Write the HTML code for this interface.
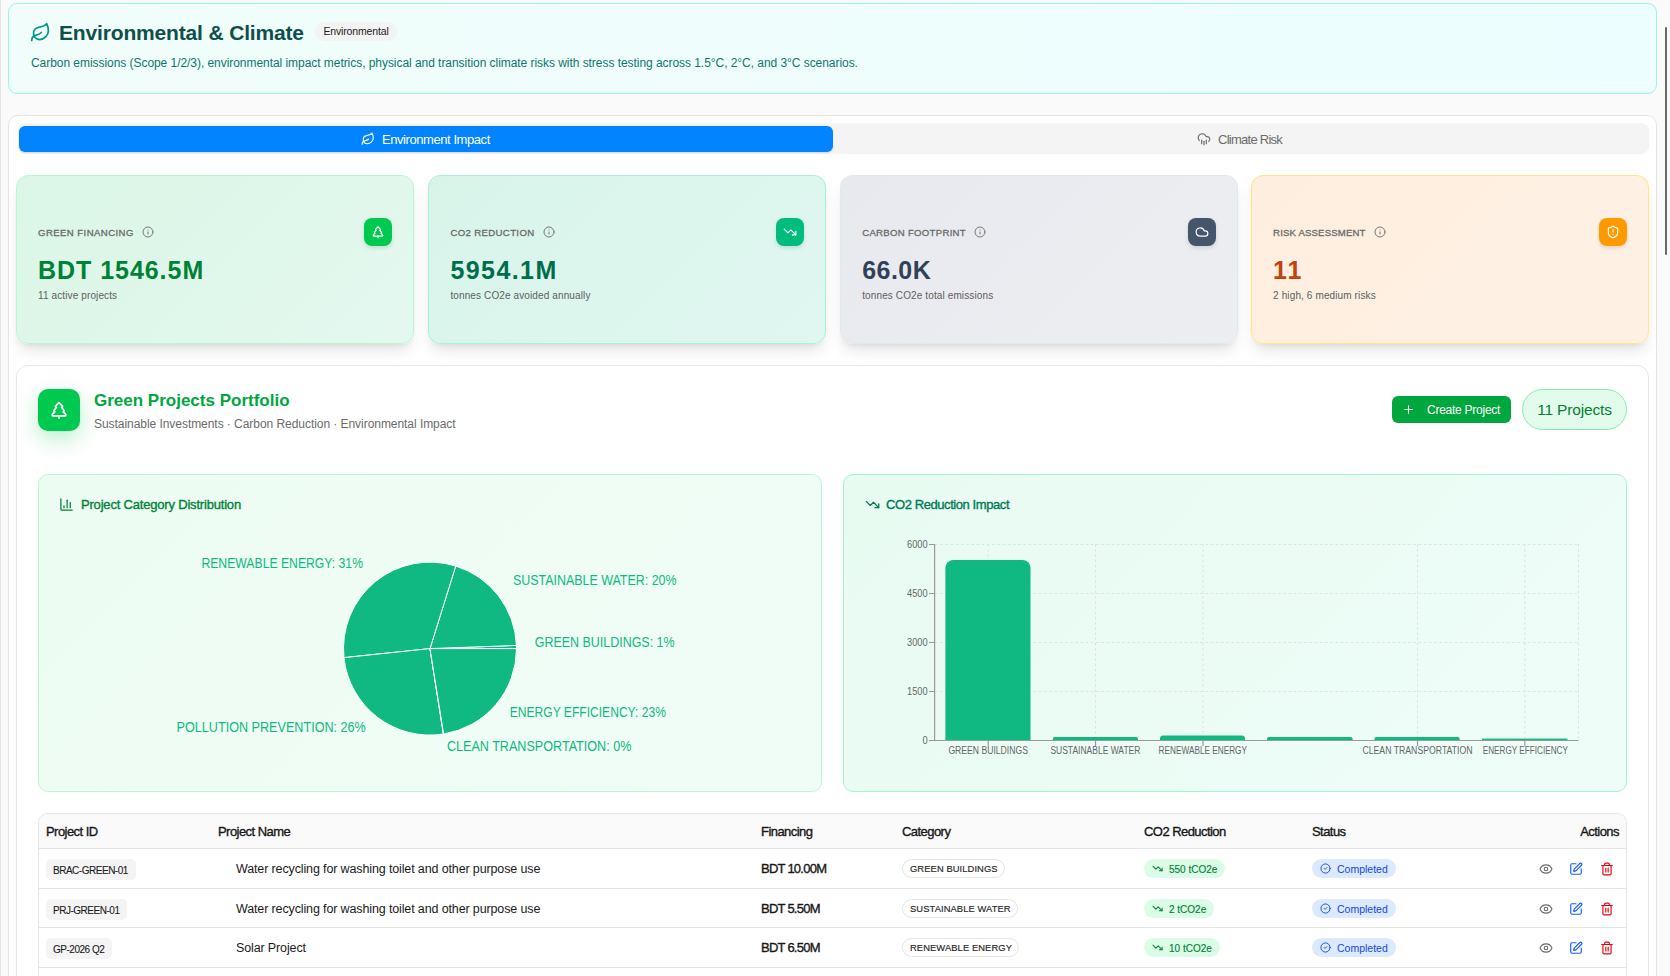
<!DOCTYPE html>
<html><head><meta charset="utf-8">
<style>
*{box-sizing:border-box;margin:0;padding:0}
html,body{width:1670px;height:976px;overflow:hidden}
body{background:#fafafa;font-family:"Liberation Sans",sans-serif;position:relative;color:#171717}
.abs{position:absolute}
svg{display:block}
.ico{fill:none;stroke:currentColor;stroke-linecap:round;stroke-linejoin:round}
#leftline{left:0;top:0;width:1px;height:976px;background:#e3e3e3}
#scroll{left:1665px;top:27px;width:2px;height:228px;background:#6a6a6a;border-radius:1px}
/* header */
#hdr{left:8px;top:3px;width:1649px;height:91px;border:1px solid #99f6e4;border-radius:9px;background:linear-gradient(90deg,#f0fdfa,#ecfeff)}
#hdr .title{left:50px;top:17px;font-size:21px;font-weight:700;letter-spacing:-.16px;color:#0f4f4a;white-space:nowrap}
#hdr .badge{left:306px;top:18px;height:19px;width:82px;border-radius:10px;background:#f3f3f3;font-size:10.5px;letter-spacing:-.15px;color:#1c1c1c;text-align:center;line-height:19px}
#hdr .desc{left:22px;top:52px;font-size:12px;letter-spacing:-.05px;color:#0f766e;white-space:nowrap}
/* outer */
#outer{left:8px;top:115px;width:1649px;height:900px;border:1px solid #e5e5e5;border-radius:10px;background:#fff}
#tabs{left:18px;top:123px;width:1631px;height:31px;background:#f4f4f4;border-radius:8px}
#tab1{left:19px;top:126px;width:814px;height:26px;background:#0283ff;border-radius:6px;box-shadow:0 1px 2px rgba(0,0,0,.12)}
.tabtxt{font-size:13px;white-space:nowrap}
/* stat cards */
.card{top:175.4px;width:397.5px;height:168.3px;border-radius:12px;border:1px solid;box-shadow:0 10px 15px -3px rgba(0,0,0,.1),0 4px 6px -4px rgba(0,0,0,.1)}
.card .lbl{left:21px;top:49.6px;font-size:9.6px;font-weight:400;-webkit-text-stroke:.3px #6b6b6b;letter-spacing:-.1px;color:#6b6b6b;white-space:nowrap;display:flex;align-items:center;height:13px}
.card .lbl svg{margin-left:8px;position:relative;top:-.5px}
.card .val{left:21px;top:80px;font-size:25px;font-weight:700;white-space:nowrap}
.card .sub{left:21px;top:113.5px;font-size:10px;letter-spacing:.12px;color:#606060;white-space:nowrap}
.card .ib{top:42px;width:28px;height:28px;border-radius:8px;box-shadow:0 2px 4px rgba(0,0,0,.12);color:#fff}
.card .ib svg{position:absolute;left:7px;top:7px}
.info{color:#777}
/* portfolio */
#port{left:16px;top:365.3px;width:1633px;height:650px;border:1px solid #e8e8e8;border-radius:12px;background:#fff}
#treebox{left:38px;top:389px;width:42px;height:42px;border-radius:10px;background:#00c950;box-shadow:0 8px 22px rgba(0,201,80,.28);color:#fff}
#ptitle{left:94px;top:391px;font-size:17px;font-weight:700;color:#00a63e;white-space:nowrap}
#psub{left:94px;top:417px;font-size:12px;letter-spacing:-.05px;color:#6b6b6b;white-space:nowrap}
#cbtn{left:1392px;top:396px;width:119px;height:27px;border-radius:6px;background:#00a63e;color:#fff}
#pill{left:1522px;top:389px;width:105px;height:41px;border-radius:21px;border:1px solid #86efac;background:#e3fbea;color:#008236;font-size:15.5px;letter-spacing:-.17px;text-align:center;line-height:39px}
.chart{top:474px;width:784px;height:318px;border:1px solid #b9f8cf;border-radius:10px;background:linear-gradient(135deg,#ecfdf3,#effdf8)}
.ctitle{font-size:13px;font-weight:400;-webkit-text-stroke:.35px currentColor;white-space:nowrap}
/* table */
#tbl{left:38px;top:813px;width:1589px;height:200px;border:1px solid #e5e5e5;border-radius:10px;overflow:hidden;background:#fff}
#thead{left:0;top:0;width:100%;height:35px;background:#fafafa;border-bottom:1px solid #e5e5e5}
.th{top:10px;font-size:13px;font-weight:400;-webkit-text-stroke:.35px #171717;letter-spacing:-.55px;color:#171717;white-space:nowrap}
.row{left:0;width:100%;height:39.5px;border-bottom:1px solid #e5e5e5}
.idb{left:7px;top:10px;height:21px;border-radius:5px;background:#f4f4f5;font-size:10px;color:#1a1a1a;-webkit-text-stroke:.1px #1a1a1a;line-height:23.5px;padding:0 8px 0 7px;white-space:nowrap;letter-spacing:-.48px}
.pname{left:197px;top:13.2px;font-size:12.5px;letter-spacing:-.13px;color:#1a1a1a;white-space:nowrap}
.fin{left:722px;top:12px;font-size:13px;font-weight:400;-webkit-text-stroke:.35px #171717;letter-spacing:-.75px;color:#171717;white-space:nowrap}
.catb{left:863px;top:10px;height:19px;border-radius:10px;border:1px solid #e5e5e5;font-size:9.4px;letter-spacing:.08px;color:#1f1f1f;-webkit-text-stroke:.15px #1f1f1f;line-height:18.5px;padding:0 6px 0 7px;white-space:nowrap}
.co2b{left:1105px;top:10px;height:19px;border-radius:10px;background:#dcfce7;color:#008236;-webkit-text-stroke:.15px #008236;font-size:10px;line-height:21px;padding:0 8px 0 25px;white-space:nowrap}
.co2b svg{position:absolute;left:8px;top:4px}
.stb{left:1273px;top:10px;height:19px;width:84px;border-radius:10px;background:#dbeafe;color:#1447e6;font-size:10.5px;line-height:20.5px;padding-left:25px;white-space:nowrap}
.stb svg{position:absolute;left:8px;top:4px}
.act{top:12px}
</style></head>
<body>
<div id="leftline" class="abs"></div>
<div id="scroll" class="abs"></div>

<!-- HEADER -->
<div id="hdr" class="abs">
  <svg class="abs ico" style="left:21px;top:18px;color:#009689" width="21" height="21" viewBox="0 0 24 24" stroke-width="2"><path d="M11 20A7 7 0 0 1 9.8 6.1C15.5 5 17 4.48 19 2c1 2 2 4.18 2 8 0 5.5-4.78 10-10 10Z"/><path d="M2 21c0-3 1.85-5.36 5.08-6C9.5 14.52 12 13 13 12"/></svg>
  <div class="abs title">Environmental &amp; Climate</div>
  <div class="abs badge">Environmental</div>
  <div class="abs desc">Carbon emissions (Scope 1/2/3), environmental impact metrics, physical and transition climate risks with stress testing across 1.5°C, 2°C, and 3°C scenarios.</div>
</div>

<!-- OUTER CARD -->
<div id="outer" class="abs"></div>
<div id="tabs" class="abs"></div>
<div id="tab1" class="abs"></div>
<svg class="abs ico" style="left:361px;top:132px;color:#fff" width="14" height="14" viewBox="0 0 24 24" stroke-width="2"><path d="M11 20A7 7 0 0 1 9.8 6.1C15.5 5 17 4.48 19 2c1 2 2 4.18 2 8 0 5.5-4.78 10-10 10Z"/><path d="M2 21c0-3 1.85-5.36 5.08-6C9.5 14.52 12 13 13 12"/></svg>
<div class="abs tabtxt" style="left:382px;top:132px;color:#fff;letter-spacing:-.43px">Environment Impact</div>
<svg class="abs ico" style="left:1196.8px;top:132px;color:#6b6b6b" width="14" height="14" viewBox="0 0 24 24" stroke-width="2"><path d="M4 14.899A7 7 0 1 1 15.71 8h1.79a4.5 4.5 0 0 1 2.5 8.242"/><path d="M16 14v6"/><path d="M8 14v6"/><path d="M12 16v6"/></svg>
<div class="abs tabtxt" style="left:1218px;top:132px;color:#6b6b6b;letter-spacing:-.74px">Climate Risk</div>

<!-- STAT CARDS -->
<div class="abs card" style="left:16px;border-color:#b9f8cf;background:linear-gradient(135deg,#dbf6e6,#e4f8ef)">
  <div class="abs lbl" style="letter-spacing:.42px">GREEN FINANCING<svg class="ico info" style="" width="12" height="12" viewBox="0 0 24 24" stroke-width="2"><circle cx="12" cy="12" r="10"/><path d="M12 16v-4"/><path d="M12 8h.01"/></svg></div>
  <div class="abs val" style="color:#008236;letter-spacing:.96px">BDT 1546.5M</div>
  <div class="abs sub">11 active projects</div>
  <div class="abs ib" style="left:347px;background:#00c950"><svg class="ico" width="14" height="14" viewBox="0 0 24 24" stroke-width="2"><path d="m17 14 3 3.3a1 1 0 0 1-.7 1.7H4.7a1 1 0 0 1-.7-1.7L7 14h-.3a1 1 0 0 1-.7-1.7L9 9h-.2A1 1 0 0 1 8 7.3L12 3l4 4.3a1 1 0 0 1-.8 1.7H15l3 3.3a1 1 0 0 1-.7 1.7H17Z"/><path d="M12 22v-3"/></svg></div>
</div>
<div class="abs card" style="left:428.4px;border-color:#a4f4cf;background:linear-gradient(135deg,#d8f4e9,#e0f7f1)">
  <div class="abs lbl" style="letter-spacing:.36px">CO2 REDUCTION<svg class="ico info" style="" width="12" height="12" viewBox="0 0 24 24" stroke-width="2"><circle cx="12" cy="12" r="10"/><path d="M12 16v-4"/><path d="M12 8h.01"/></svg></div>
  <div class="abs val" style="color:#006e4e;letter-spacing:1.43px">5954.1M</div>
  <div class="abs sub">tonnes CO2e avoided annually</div>
  <div class="abs ib" style="left:347px;background:#00bc7d"><svg class="ico" width="14" height="14" viewBox="0 0 24 24" stroke-width="2"><path d="M16 17h6v-6"/><path d="m22 17-8.5-8.5-5 5L2 7"/></svg></div>
</div>
<div class="abs card" style="left:840.2px;border-color:#e2e8f0;background:linear-gradient(135deg,#e7e9ee,#eceef2)">
  <div class="abs lbl" style="letter-spacing:.29px">CARBON FOOTPRINT<svg class="ico info" style="" width="12" height="12" viewBox="0 0 24 24" stroke-width="2"><circle cx="12" cy="12" r="10"/><path d="M12 16v-4"/><path d="M12 8h.01"/></svg></div>
  <div class="abs val" style="color:#314158;letter-spacing:.45px">66.0K</div>
  <div class="abs sub">tonnes CO2e total emissions</div>
  <div class="abs ib" style="left:347px;background:#45556c"><svg class="ico" width="14" height="14" viewBox="0 0 24 24" stroke-width="2"><path d="M17.5 19H9a7 7 0 1 1 6.71-9h1.79a4.5 4.5 0 1 1 0 9Z"/></svg></div>
</div>
<div class="abs card" style="left:1251.1px;border-color:#fee685;background:linear-gradient(135deg,#feeedf,#fef1e4)">
  <div class="abs lbl" style="letter-spacing:.16px">RISK ASSESSMENT<svg class="ico info" style="" width="12" height="12" viewBox="0 0 24 24" stroke-width="2"><circle cx="12" cy="12" r="10"/><path d="M12 16v-4"/><path d="M12 8h.01"/></svg></div>
  <div class="abs val" style="color:#c2410c;letter-spacing:1.9px">11</div>
  <div class="abs sub">2 high, 6 medium risks</div>
  <div class="abs ib" style="left:347px;background:#fe9a00"><svg class="ico" width="14" height="14" viewBox="0 0 24 24" stroke-width="2"><path d="M20 13c0 5-3.5 7.5-7.66 8.95a1 1 0 0 1-.67-.01C7.5 20.5 4 18 4 13V6a1 1 0 0 1 1-1c2 0 4.5-1.2 6.24-2.72a1.17 1.17 0 0 1 1.52 0C14.51 3.81 17 5 19 5a1 1 0 0 1 1 1z"/><path d="M12 8v4"/><path d="M12 16h.01"/></svg></div>
</div>

<!-- PORTFOLIO -->
<div id="port" class="abs"></div>
<div id="treebox" class="abs"><svg class="abs ico" style="left:11px;top:11px" width="20" height="20" viewBox="0 0 24 24" stroke-width="2"><path d="m17 14 3 3.3a1 1 0 0 1-.7 1.7H4.7a1 1 0 0 1-.7-1.7L7 14h-.3a1 1 0 0 1-.7-1.7L9 9h-.2A1 1 0 0 1 8 7.3L12 3l4 4.3a1 1 0 0 1-.8 1.7H15l3 3.3a1 1 0 0 1-.7 1.7H17Z"/><path d="M12 22v-3"/></svg></div>
<div id="ptitle" class="abs">Green Projects Portfolio</div>
<div id="psub" class="abs">Sustainable Investments · Carbon Reduction · Environmental Impact</div>
<div id="cbtn" class="abs">
  <svg class="abs ico" style="left:9.5px;top:7px" width="13" height="13" viewBox="0 0 24 24" stroke-width="2"><path d="M5 12h14"/><path d="M12 5v14"/></svg>
  <div class="abs" style="left:35px;top:7px;font-size:12px;letter-spacing:-.25px;white-space:nowrap">Create Project</div>
</div>
<div id="pill" class="abs">11 Projects</div>

<!-- CHARTS -->
<div class="abs chart" style="left:38px;border-color:#b9f8cf;background:linear-gradient(135deg,#edfcf2,#f0fdf7)"></div>
<div class="abs chart" style="left:843px;border-color:#a4f4cf;background:linear-gradient(135deg,#e8fbf1,#effdf9)"></div>
<svg class="abs ico" style="left:59px;top:497px;color:#008236" width="15" height="15" viewBox="0 0 24 24" stroke-width="2"><path d="M3 3v16a2 2 0 0 0 2 2h16"/><path d="M18 17V9"/><path d="M13 17V5"/><path d="M8 17v-3"/></svg>
<div class="abs ctitle" style="left:81px;top:497.4px;color:#008236;letter-spacing:-.19px">Project Category Distribution</div>
<svg class="abs ico" style="left:865px;top:497px;color:#007a55" width="15" height="15" viewBox="0 0 24 24" stroke-width="2"><path d="M16 17h6v-6"/><path d="m22 17-8.5-8.5-5 5L2 7"/></svg>
<div class="abs ctitle" style="left:886px;top:497.4px;color:#007a55;letter-spacing:-.42px">CO2 Reduction Impact</div>

<svg class="abs" style="left:0;top:0" width="1670" height="976" viewBox="0 0 1670 976">
 <g fill="#10b981" stroke="#fff" stroke-width="1">
  <path d="M430,648.6 L516.50,648.60 A86.5,86.5 0 0 0 516.44,645.43 Z"/>
  <path d="M430,648.6 L516.44,645.43 A86.5,86.5 0 0 0 455.72,566.01 Z"/>
  <path d="M430,648.6 L455.72,566.01 A86.5,86.5 0 0 0 343.97,657.64 Z"/>
  <path d="M430,648.6 L343.97,657.64 A86.5,86.5 0 0 0 443.38,734.06 Z"/>
  <path d="M430,648.6 L443.38,734.06 A86.5,86.5 0 0 0 443.61,734.02 Z"/>
  <path d="M430,648.6 L443.61,734.02 A86.5,86.5 0 0 0 516.50,648.60 Z"/>
 </g>
 <g fill="#10b981" font-family="Liberation Sans, sans-serif" font-size="14" lengthAdjust="spacingAndGlyphs">
  <text x="201.4" y="568" textLength="161.6" lengthAdjust="spacingAndGlyphs">RENEWABLE ENERGY: 31%</text>
  <text x="512.9" y="584.8" textLength="163.7" lengthAdjust="spacingAndGlyphs">SUSTAINABLE WATER: 20%</text>
  <text x="534.7" y="646.8" textLength="139.9" lengthAdjust="spacingAndGlyphs">GREEN BUILDINGS: 1%</text>
  <text x="509.7" y="716.8" textLength="156.2" lengthAdjust="spacingAndGlyphs">ENERGY EFFICIENCY: 23%</text>
  <text x="176.6" y="731.5" textLength="189.2" lengthAdjust="spacingAndGlyphs">POLLUTION PREVENTION: 26%</text>
  <text x="446.9" y="751.3" textLength="184.5" lengthAdjust="spacingAndGlyphs">CLEAN TRANSPORTATION: 0%</text>
 </g>
 <!-- bar chart -->
 <g stroke="#e2e2e2" stroke-width="1" stroke-dasharray="2.6 2.6" fill="none">
  <path d="M935,544.5H1578.5M935,593.5H1578.5M935,642.5H1578.5M935,691.5H1578.5"/>
  <path d="M988.2,544V740M1095.5,544V740M1203,544V740M1417.5,544V740M1524.8,544V740M1578.5,544V740"/>
 </g>
 <g fill="#10b981">
  <path d="M945.4,740V568a8,8 0 0 1 8,-8H1022.5a8,8 0 0 1 8,8V740Z"/>
  <path d="M1052.8,740V739a2,2 0 0 1 2,-2H1136a2,2 0 0 1 2,2V740Z"/>
  <path d="M1160,740V739a3,3 0 0 1 3,-3.5H1242a3,3 0 0 1 3,3.5V740Z"/>
  <path d="M1267,740V739a2,2 0 0 1 2,-2H1350.6a2,2 0 0 1 2,2V740Z"/>
  <path d="M1374.5,740V739a2,2 0 0 1 2,-2H1457.7a2,2 0 0 1 2,2V740Z"/>
  <rect x="1482" y="738.6" width="85.5" height="1.6"/>
 </g>
 <g stroke="#999" stroke-width="1.2" fill="none">
  <path d="M934.6,544V740.5"/>
  <path d="M934,740.5H1578.5"/>
  <path d="M929,544.5H934.6M929,593.5H934.6M929,642.5H934.6M929,691.5H934.6M929,740.5H934.6"/>
  <path d="M988.2,740.5V746M1095.5,740.5V746M1203,740.5V746M1417.5,740.5V746M1524.8,740.5V746"/>
 </g>
 <g fill="#666" font-family="Liberation Sans, sans-serif" font-size="10" text-anchor="end">
  <text x="927.6" y="548.4" textLength="20.6" lengthAdjust="spacingAndGlyphs">6000</text>
  <text x="927.6" y="597.4" textLength="20.6" lengthAdjust="spacingAndGlyphs">4500</text>
  <text x="927.6" y="646.4" textLength="20.6" lengthAdjust="spacingAndGlyphs">3000</text>
  <text x="927.6" y="695.4" textLength="20.6" lengthAdjust="spacingAndGlyphs">1500</text>
  <text x="927.6" y="744.4" textLength="5.2" lengthAdjust="spacingAndGlyphs">0</text>
 </g>
 <g fill="#666" font-family="Liberation Sans, sans-serif" font-size="10">
  <text x="948.4" y="754.2" textLength="79.5" lengthAdjust="spacingAndGlyphs">GREEN BUILDINGS</text>
  <text x="1050.4" y="754.2" textLength="90" lengthAdjust="spacingAndGlyphs">SUSTAINABLE WATER</text>
  <text x="1158.6" y="754.2" textLength="88.4" lengthAdjust="spacingAndGlyphs">RENEWABLE ENERGY</text>
  <text x="1362.4" y="754.2" textLength="110.2" lengthAdjust="spacingAndGlyphs">CLEAN TRANSPORTATION</text>
  <text x="1482.7" y="754.2" textLength="85.3" lengthAdjust="spacingAndGlyphs">ENERGY EFFICIENCY</text>
 </g>
</svg>

<!-- TABLE -->
<div id="tbl" class="abs">
  <div id="thead" class="abs">
    <div class="abs th" style="left:7px">Project ID</div>
    <div class="abs th" style="left:179px">Project Name</div>
    <div class="abs th" style="left:722px">Financing</div>
    <div class="abs th" style="left:863px">Category</div>
    <div class="abs th" style="left:1105px">CO2 Reduction</div>
    <div class="abs th" style="left:1273px">Status</div>
    <div class="abs th" style="right:7px">Actions</div>
  </div>
  <div class="abs row" style="top:35px">
    <div class="abs idb">BRAC-GREEN-01</div>
    <div class="abs pname">Water recycling for washing toilet and other purpose use</div>
    <div class="abs fin">BDT 10.00M</div>
    <div class="abs catb">GREEN BUILDINGS</div>
    <div class="abs co2b"><svg class="ico" width="11" height="11" viewBox="0 0 24 24" stroke-width="2.2"><path d="M16 17h6v-6"/><path d="m22 17-8.5-8.5-5 5L2 7"/></svg>550 tCO2e</div>
    <div class="abs stb"><svg class="ico" width="11" height="11" viewBox="0 0 24 24" stroke-width="2"><circle cx="12" cy="12" r="10"/><path d="m9 12 2 2 4-4"/></svg>Completed</div>
    <svg class="abs ico" style="left:1499.5px;top:13.3px;color:#6b6b6b" width="14" height="14" viewBox="0 0 24 24" stroke-width="2"><path d="M2.062 12.348a1 1 0 0 1 0-.696 10.75 10.75 0 0 1 19.876 0 1 1 0 0 1 0 .696 10.75 10.75 0 0 1-19.876 0"/><circle cx="12" cy="12" r="3"/></svg>
    <svg class="abs ico" style="left:1530px;top:13.3px;color:#155dfc" width="14" height="14" viewBox="0 0 24 24" stroke-width="2"><path d="M12 3H5a2 2 0 0 0-2 2v14a2 2 0 0 0 2 2h14a2 2 0 0 0 2-2v-7"/><path d="M18.375 2.625a1 1 0 0 1 3 3l-9.013 9.014a2 2 0 0 1-.853.505l-2.873.84a.5.5 0 0 1-.62-.62l.84-2.873a2 2 0 0 1 .506-.852z"/></svg>
    <svg class="abs ico" style="left:1561px;top:13.3px;color:#e7000b" width="14" height="14" viewBox="0 0 24 24" stroke-width="2"><path d="M3 6h18"/><path d="M19 6v14c0 1-1 2-2 2H7c-1 0-2-1-2-2V6"/><path d="M8 6V4c0-1 1-2 2-2h4c1 0 2 1 2 2v2"/><line x1="10" x2="10" y1="11" y2="17"/><line x1="14" x2="14" y1="11" y2="17"/></svg>
  </div>
  <div class="abs row" style="top:74.5px">
    <div class="abs idb">PRJ-GREEN-01</div>
    <div class="abs pname">Water recycling for washing toilet and other purpose use</div>
    <div class="abs fin">BDT 5.50M</div>
    <div class="abs catb">SUSTAINABLE WATER</div>
    <div class="abs co2b"><svg class="ico" width="11" height="11" viewBox="0 0 24 24" stroke-width="2.2"><path d="M16 17h6v-6"/><path d="m22 17-8.5-8.5-5 5L2 7"/></svg>2 tCO2e</div>
    <div class="abs stb"><svg class="ico" width="11" height="11" viewBox="0 0 24 24" stroke-width="2"><circle cx="12" cy="12" r="10"/><path d="m9 12 2 2 4-4"/></svg>Completed</div>
    <svg class="abs ico" style="left:1499.5px;top:13.3px;color:#6b6b6b" width="14" height="14" viewBox="0 0 24 24" stroke-width="2"><path d="M2.062 12.348a1 1 0 0 1 0-.696 10.75 10.75 0 0 1 19.876 0 1 1 0 0 1 0 .696 10.75 10.75 0 0 1-19.876 0"/><circle cx="12" cy="12" r="3"/></svg>
    <svg class="abs ico" style="left:1530px;top:13.3px;color:#155dfc" width="14" height="14" viewBox="0 0 24 24" stroke-width="2"><path d="M12 3H5a2 2 0 0 0-2 2v14a2 2 0 0 0 2 2h14a2 2 0 0 0 2-2v-7"/><path d="M18.375 2.625a1 1 0 0 1 3 3l-9.013 9.014a2 2 0 0 1-.853.505l-2.873.84a.5.5 0 0 1-.62-.62l.84-2.873a2 2 0 0 1 .506-.852z"/></svg>
    <svg class="abs ico" style="left:1561px;top:13.3px;color:#e7000b" width="14" height="14" viewBox="0 0 24 24" stroke-width="2"><path d="M3 6h18"/><path d="M19 6v14c0 1-1 2-2 2H7c-1 0-2-1-2-2V6"/><path d="M8 6V4c0-1 1-2 2-2h4c1 0 2 1 2 2v2"/><line x1="10" x2="10" y1="11" y2="17"/><line x1="14" x2="14" y1="11" y2="17"/></svg>
  </div>
  <div class="abs row" style="top:114px">
    <div class="abs idb">GP-2026 Q2</div>
    <div class="abs pname">Solar Project</div>
    <div class="abs fin">BDT 6.50M</div>
    <div class="abs catb">RENEWABLE ENERGY</div>
    <div class="abs co2b"><svg class="ico" width="11" height="11" viewBox="0 0 24 24" stroke-width="2.2"><path d="M16 17h6v-6"/><path d="m22 17-8.5-8.5-5 5L2 7"/></svg>10 tCO2e</div>
    <div class="abs stb"><svg class="ico" width="11" height="11" viewBox="0 0 24 24" stroke-width="2"><circle cx="12" cy="12" r="10"/><path d="m9 12 2 2 4-4"/></svg>Completed</div>
    <svg class="abs ico" style="left:1499.5px;top:13.3px;color:#6b6b6b" width="14" height="14" viewBox="0 0 24 24" stroke-width="2"><path d="M2.062 12.348a1 1 0 0 1 0-.696 10.75 10.75 0 0 1 19.876 0 1 1 0 0 1 0 .696 10.75 10.75 0 0 1-19.876 0"/><circle cx="12" cy="12" r="3"/></svg>
    <svg class="abs ico" style="left:1530px;top:13.3px;color:#155dfc" width="14" height="14" viewBox="0 0 24 24" stroke-width="2"><path d="M12 3H5a2 2 0 0 0-2 2v14a2 2 0 0 0 2 2h14a2 2 0 0 0 2-2v-7"/><path d="M18.375 2.625a1 1 0 0 1 3 3l-9.013 9.014a2 2 0 0 1-.853.505l-2.873.84a.5.5 0 0 1-.62-.62l.84-2.873a2 2 0 0 1 .506-.852z"/></svg>
    <svg class="abs ico" style="left:1561px;top:13.3px;color:#e7000b" width="14" height="14" viewBox="0 0 24 24" stroke-width="2"><path d="M3 6h18"/><path d="M19 6v14c0 1-1 2-2 2H7c-1 0-2-1-2-2V6"/><path d="M8 6V4c0-1 1-2 2-2h4c1 0 2 1 2 2v2"/><line x1="10" x2="10" y1="11" y2="17"/><line x1="14" x2="14" y1="11" y2="17"/></svg>
  </div>
  <div class="abs row" style="top:153.4px">
    <div class="abs idb">GP-2026 Q3</div>
    <div class="abs pname">Wind Project</div>
    <div class="abs fin">BDT 8.00M</div>
    <div class="abs catb">RENEWABLE ENERGY</div>
    <div class="abs co2b"><svg class="ico" width="11" height="11" viewBox="0 0 24 24" stroke-width="2.2"><path d="M16 17h6v-6"/><path d="m22 17-8.5-8.5-5 5L2 7"/></svg>12 tCO2e</div>
    <div class="abs stb"><svg class="ico" width="11" height="11" viewBox="0 0 24 24" stroke-width="2"><circle cx="12" cy="12" r="10"/><path d="m9 12 2 2 4-4"/></svg>Completed</div>
    <svg class="abs ico" style="left:1499.5px;top:13.3px;color:#6b6b6b" width="14" height="14" viewBox="0 0 24 24" stroke-width="2"><path d="M2.062 12.348a1 1 0 0 1 0-.696 10.75 10.75 0 0 1 19.876 0 1 1 0 0 1 0 .696 10.75 10.75 0 0 1-19.876 0"/><circle cx="12" cy="12" r="3"/></svg>
    <svg class="abs ico" style="left:1530px;top:13.3px;color:#155dfc" width="14" height="14" viewBox="0 0 24 24" stroke-width="2"><path d="M12 3H5a2 2 0 0 0-2 2v14a2 2 0 0 0 2 2h14a2 2 0 0 0 2-2v-7"/><path d="M18.375 2.625a1 1 0 0 1 3 3l-9.013 9.014a2 2 0 0 1-.853.505l-2.873.84a.5.5 0 0 1-.62-.62l.84-2.873a2 2 0 0 1 .506-.852z"/></svg>
    <svg class="abs ico" style="left:1561px;top:13.3px;color:#e7000b" width="14" height="14" viewBox="0 0 24 24" stroke-width="2"><path d="M3 6h18"/><path d="M19 6v14c0 1-1 2-2 2H7c-1 0-2-1-2-2V6"/><path d="M8 6V4c0-1 1-2 2-2h4c1 0 2 1 2 2v2"/><line x1="10" x2="10" y1="11" y2="17"/><line x1="14" x2="14" y1="11" y2="17"/></svg>
  </div>
</div>
</body></html>
